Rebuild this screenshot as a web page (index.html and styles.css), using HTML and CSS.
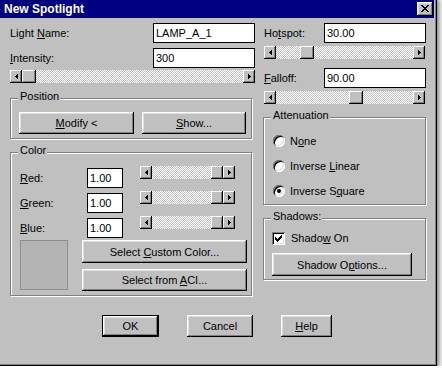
FILE: index.html
```html
<!DOCTYPE html>
<html>
<head>
<meta charset="utf-8">
<link rel="stylesheet" href="styles.css">
</head>
<body>
<div class="window">
  <div class="titlebar">
    <span class="title">New Spotlight</span>
    <span class="close"><svg width="8" height="7" viewBox="0 0 8 7" shape-rendering="crispEdges"><path d="M0 0h2v1H0zM6 0h2v1H6zM1 1h2v1H1zM5 1h2v1H5zM2 2h4v1H2zM3 3h2v1H3zM2 4h4v1H2zM1 5h2v1H1zM5 5h2v1H5zM0 6h2v1H0zM6 6h2v1H6z"/></svg></span>
  </div>
  <div class="main">
    <div class="col">
      <div class="field-row"><span class="lbl">Light <u>N</u>ame:</span><span class="edit">LAMP_A_1</span></div>
      <div class="field-row gap5"><span class="lbl"><u>I</u>ntensity:</span><span class="edit">300</span></div>
      <div class="hscroll gap2">
        <span class="sb-btn"><svg width="3" height="5" viewBox="0 0 3 5" shape-rendering="crispEdges"><path d="M0 2h1v1H0zM1 1h1v3H1zM2 0h1v5H2z"/></svg></span>
        <span class="track"><span class="thumb" style="margin-left:0px"></span></span>
        <span class="sb-btn"><svg width="3" height="5" viewBox="0 0 3 5" shape-rendering="crispEdges"><path d="M2 2h1v1H2zM1 1h1v3H1zM0 0h1v5H0z"/></svg></span>
      </div>
      <div class="group position">
        <span class="group-title">Position</span>
        <div class="btn-row">
          <button class="btn modify"><u>M</u>odify &lt;</button>
          <button class="btn show"><u>S</u>how...</button>
        </div>
      </div>
      <div class="group color">
        <span class="group-title">Color</span>
        <div class="color-row">
          <span class="clbl"><u>R</u>ed:</span><span class="edit small">1.00</span>
          <div class="hscroll cscroll">
            <span class="sb-btn"><svg width="3" height="5" viewBox="0 0 3 5" shape-rendering="crispEdges"><path d="M0 2h1v1H0zM1 1h1v3H1zM2 0h1v5H2z"/></svg></span>
            <span class="track"><span class="thumb cthumb" style="margin-left:59px"></span></span>
            <span class="sb-btn"><svg width="3" height="5" viewBox="0 0 3 5" shape-rendering="crispEdges"><path d="M2 2h1v1H2zM1 1h1v3H1zM0 0h1v5H0z"/></svg></span>
          </div>
        </div>
        <div class="color-row">
          <span class="clbl"><u>G</u>reen:</span><span class="edit small">1.00</span>
          <div class="hscroll cscroll">
            <span class="sb-btn"><svg width="3" height="5" viewBox="0 0 3 5" shape-rendering="crispEdges"><path d="M0 2h1v1H0zM1 1h1v3H1zM2 0h1v5H2z"/></svg></span>
            <span class="track"><span class="thumb cthumb" style="margin-left:59px"></span></span>
            <span class="sb-btn"><svg width="3" height="5" viewBox="0 0 3 5" shape-rendering="crispEdges"><path d="M2 2h1v1H2zM1 1h1v3H1zM0 0h1v5H0z"/></svg></span>
          </div>
        </div>
        <div class="color-row">
          <span class="clbl"><u>B</u>lue:</span><span class="edit small">1.00</span>
          <div class="hscroll cscroll">
            <span class="sb-btn"><svg width="3" height="5" viewBox="0 0 3 5" shape-rendering="crispEdges"><path d="M0 2h1v1H0zM1 1h1v3H1zM2 0h1v5H2z"/></svg></span>
            <span class="track"><span class="thumb cthumb" style="margin-left:59px"></span></span>
            <span class="sb-btn"><svg width="3" height="5" viewBox="0 0 3 5" shape-rendering="crispEdges"><path d="M2 2h1v1H2zM1 1h1v3H1zM0 0h1v5H0z"/></svg></span>
          </div>
        </div>
        <div class="color-bottom">
          <span class="swatch"></span>
          <div class="color-btns">
            <button class="btn custom">Select <u>C</u>ustom Color...</button>
            <button class="btn aci">Select from <u>A</u>CI...</button>
          </div>
        </div>
      </div>
    </div>
    <div class="col">
      <div class="field-row"><span class="lbl r">Ho<u>t</u>spot:</span><span class="edit">30.00</span></div>
      <div class="hscroll rscroll gap3">
        <span class="sb-btn"><svg width="3" height="5" viewBox="0 0 3 5" shape-rendering="crispEdges"><path d="M0 2h1v1H0zM1 1h1v3H1zM2 0h1v5H2z"/></svg></span>
        <span class="track"><span class="thumb" style="margin-left:24px"></span></span>
        <span class="sb-btn"><svg width="3" height="5" viewBox="0 0 3 5" shape-rendering="crispEdges"><path d="M2 2h1v1H2zM1 1h1v3H1zM0 0h1v5H0z"/></svg></span>
      </div>
      <div class="field-row gap9"><span class="lbl r"><u>F</u>alloff:</span><span class="edit">90.00</span></div>
      <div class="hscroll rscroll gap3">
        <span class="sb-btn"><svg width="3" height="5" viewBox="0 0 3 5" shape-rendering="crispEdges"><path d="M0 2h1v1H0zM1 1h1v3H1zM2 0h1v5H2z"/></svg></span>
        <span class="track"><span class="thumb" style="margin-left:73px"></span></span>
        <span class="sb-btn"><svg width="3" height="5" viewBox="0 0 3 5" shape-rendering="crispEdges"><path d="M2 2h1v1H2zM1 1h1v3H1zM0 0h1v5H0z"/></svg></span>
      </div>
      <div class="group atten">
        <span class="group-title">Attenuation</span>
        <div class="radio-row"><span class="radio"></span><span>N<u>o</u>ne</span></div>
        <div class="radio-row"><span class="radio"></span><span>Inverse <u>L</u>inear</span></div>
        <div class="radio-row"><span class="radio checked"></span><span>Inverse S<u>q</u>uare</span></div>
      </div>
      <div class="group shadows">
        <span class="group-title">Shadows:</span>
        <div class="check-row"><span class="checkbox"><svg width="7" height="7" viewBox="0 0 7 7" shape-rendering="crispEdges"><path d="M6 0h1v3H6zM5 1h1v3H5zM4 2h1v3H4zM3 3h1v3H3zM2 4h1v3H2zM1 3h1v3H1zM0 2h1v3H0z"/></svg></span><span>Shado<u>w</u> On</span></div>
        <button class="btn shadow-opts">Shadow O<u>p</u>tions...</button>
      </div>
    </div>
  </div>
  <div class="footer">
    <button class="btn default ok">OK</button>
    <button class="btn cancel">Cancel</button>
    <button class="btn help"><u>H</u>elp</button>
  </div>
</div>
</body>
</html>
```
FILE: styles.css
```css
html, body {
  margin: 0;
  padding: 0;
}
body {
  background: #ffffff;
  font-family: "Liberation Sans", Arial, sans-serif;
  font-size: 11px;
  color: #000;
  overflow: hidden;
}
.window {
  margin: -3px 0 0 -3px;
  width: 440px;
  height: 369px;
  box-sizing: border-box;
  background: #c0c0c0;
  border: 1px solid;
  border-color: #dfdfdf #000 #000 #dfdfdf;
  box-shadow: inset 1px 1px #fff, inset -1px -1px #808080, 2px 2px 5px rgba(0,0,0,0.55);
  padding: 2px;
}
.titlebar {
  height: 18px;
  background: #000080;
  color: #fff;
  display: flex;
  align-items: center;
  justify-content: space-between;
  padding: 0 1px 0 4px;
}
.title {
  font-weight: bold;
  font-size: 12px;
}
.close {
  width: 16px;
  height: 14px;
  background: #c0c0c0;
  box-shadow: inset -1px -1px #000, inset 1px 1px #fff, inset -2px -2px #808080, inset 2px 2px #dfdfdf;
  display: flex;
  align-items: center;
  justify-content: center;
}
.close svg { margin-top: -1px; }
.main {
  display: grid;
  grid-template-columns: 245px 163px;
  column-gap: 8px;
  padding: 5px 8px 0 10px;
  align-items: start;
}
.col {
  display: flex;
  flex-direction: column;
  align-items: flex-start;
}
.field-row {
  display: flex;
  align-items: center;
  height: 20px;
  width: 100%;
}
.lbl { flex: 1; }
.lbl.r { padding-left: 1px; }
.gap5 { margin-top: 5px; }
.gap2 { margin-top: 2px; }
.gap3 { margin-top: 3px; }
.gap9 { margin-top: 9px; }
.edit {
  width: 102px;
  height: 20px;
  box-sizing: border-box;
  border: 1px solid #000;
  background: #fff;
  padding: 0 2px;
  display: flex;
  align-items: center;
  flex: none;
}
.edit.small { width: 36px; margin-top: 3px; }
.hscroll {
  display: flex;
  height: 13px;
  width: 245px;
}
.rscroll { width: 161px; margin-left: 1px; }
.sb-btn {
  width: 12px;
  height: 100%;
  flex: none;
  background: #c0c0c0;
  box-shadow: inset -1px -1px #000, inset 1px 1px #fff, inset -2px -2px #808080;
  display: flex;
  align-items: center;
  justify-content: center;
}
.sb-btn svg { margin-top: -1px; }
.track {
  flex: 1;
  display: flex;
  background: repeating-conic-gradient(#c0c0c0 0 25%, #fff 0 50%) 0 0 / 2px 2px;
}
.thumb {
  width: 14px;
  height: 100%;
  flex: none;
  background: #c0c0c0;
  box-shadow: inset -1px -1px #000, inset 1px 1px #fff, inset -2px -2px #808080;
}
.thumb.cthumb { width: 12px; }
.group {
  position: relative;
  box-sizing: border-box;
  border: 1px solid #808080;
  box-shadow: inset 1px 1px #fff, 1px 1px #fff;
}
.group-title {
  position: absolute;
  left: 7px;
  top: -9px;
  line-height: 13px;
  background: #c0c0c0;
  padding: 0 1px 0 2px;
}
.position {
  margin-top: 15px;
  width: 242px;
  padding: 13px 0 4px 8px;
}
.btn-row {
  display: flex;
  gap: 8px;
}
.btn {
  font: inherit;
  color: #000;
  border: none;
  margin: 0;
  padding: 0;
  background: #c0c0c0;
  box-shadow: inset -1px -1px #000, inset 1px 1px #fff, inset -2px -2px #808080, inset 2px 2px #dfdfdf;
  height: 22px;
  text-align: center;
  white-space: nowrap;
}
.btn.default {
  box-shadow: inset 0 0 0 1px #000, inset -2px -2px #000, inset 2px 2px #fff, inset -3px -3px #808080, inset 3px 3px #dfdfdf;
}
.modify { width: 115px; }
.show { width: 104px; }
.color {
  margin-top: 13px;
  width: 242px;
  padding: 12px 0 4px 9px;
}
.color-row {
  display: flex;
  align-items: flex-start;
  height: 25px;
}
.clbl {
  width: 67px;
  line-height: 20px;
  margin-top: 3px;
}
.cscroll {
  width: 95px;
  margin-left: 17px;
  margin-top: 1px;
}
.color-bottom {
  display: flex;
  align-items: flex-start;
}
.swatch {
  width: 48px;
  height: 50px;
  box-sizing: border-box;
  background: #b4b4b4;
  border: 1px solid #8e8e8e;
}
.color-btns {
  margin-left: 14px;
  display: flex;
  flex-direction: column;
  gap: 6px;
}
.custom { width: 165px; height: 23px; }
.aci { width: 165px; height: 22px; }
.atten {
  margin-top: 13px;
  width: 163px;
  padding: 10px 0 1px 9px;
}
.radio-row {
  display: flex;
  align-items: center;
  height: 25px;
  gap: 5px;
}
.radio {
  width: 12px;
  height: 12px;
  border-radius: 50%;
  background: #fff;
  box-shadow: inset 1px 1px #808080, inset -1px -1px #fff, inset 2px 2px #000, inset -2px -2px #dfdfdf;
  position: relative;
  flex: none;
}
.radio.checked::after {
  content: "";
  position: absolute;
  left: 4px;
  top: 4px;
  width: 4px;
  height: 4px;
  border-radius: 50%;
  background: #000;
}
.shadows {
  margin-top: 13px;
  width: 163px;
  padding: 11px 0 3px 8px;
}
.check-row {
  display: flex;
  align-items: center;
  height: 16px;
  gap: 6px;
}
.checkbox {
  width: 13px;
  height: 13px;
  background: #fff;
  box-shadow: inset 1px 1px #808080, inset -1px -1px #fff, inset 2px 2px #000, inset -2px -2px #dfdfdf;
  display: flex;
  align-items: center;
  justify-content: center;
  flex: none;
}
.shadow-opts {
  width: 140px;
  height: 23px;
  margin-top: 7px;
}
.footer {
  margin-top: 19px;
  display: flex;
  justify-content: center;
  gap: 28px;
}
.ok { width: 57px; }
.cancel { width: 66px; }
.help { width: 51px; }
```
